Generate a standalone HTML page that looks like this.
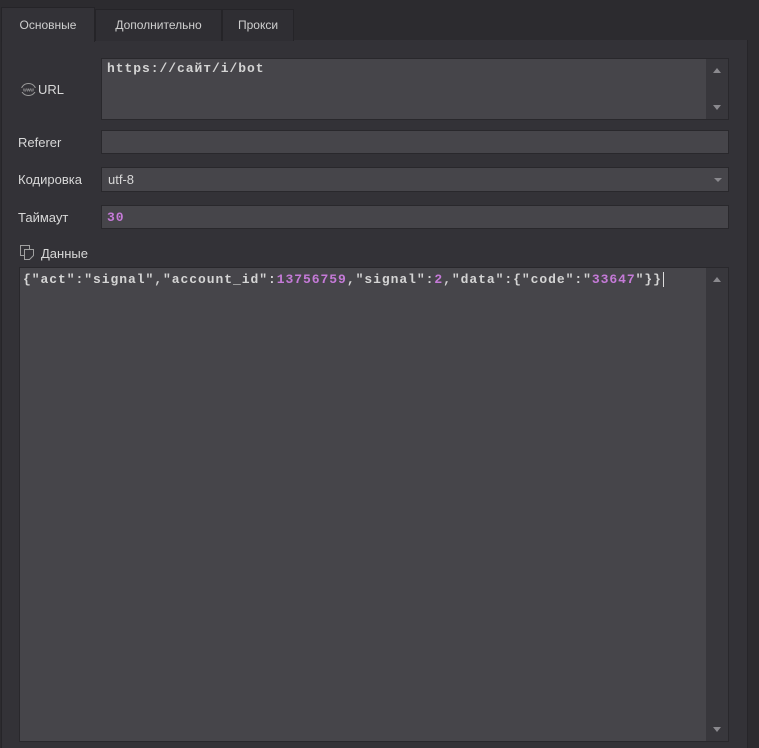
<!DOCTYPE html>
<html><head><meta charset="utf-8"><style>
body{margin:0;width:759px;height:748px;background:#2c2b2f;position:relative;overflow:hidden;font-family:"Liberation Sans",sans-serif;font-size:13px;color:#d8d8d8}
.a{position:absolute}
.tab{position:absolute;top:9px;height:31px;background:#2f2e33;border:1px solid #252428;border-bottom:none;line-height:31px;text-align:center;color:#cfcfcf;font-size:12px}
.panel{left:1px;top:40px;width:745px;height:708px;background:#333237;border-left:1px solid #262529;border-right:1px solid #262529}
.f{position:absolute;background:#46454a;border:1px solid #29282c;box-sizing:border-box}
.lbl{position:absolute;color:#d8d8d8;font-size:13px}
.mono{font-family:"Liberation Mono",monospace;font-size:13px;letter-spacing:0.95px;color:#d4d4d4;font-weight:bold}
.sb{position:absolute;right:0;top:0;bottom:0;width:22px;background:#38373c}
.up,.dn{position:absolute;left:7px;width:0;height:0;border-left:4px solid transparent;border-right:4px solid transparent}
.up{border-bottom:5px solid #8a898e;top:9px}
.dn{border-top:5px solid #8a898e;bottom:9px}
.p{color:#c57ad8}
</style></head><body>
<div class="a panel"></div>
<div class="tab" style="left:1px;width:92px;background:#333237;top:7px;height:34px;line-height:34px">Основные</div>
<div class="tab" style="left:95px;width:125px">Дополнительно</div>
<div class="tab" style="left:222px;width:70px">Прокси</div>

<svg class="a" style="left:20px;top:83px" width="17" height="13" viewBox="0 0 17 13"><ellipse cx="8.5" cy="6.5" rx="7" ry="6" fill="none" stroke="#9a9a9a"/><rect x="0" y="5" width="17" height="4" fill="#333237"/><text x="8.5" y="8.5" font-size="5" text-anchor="middle" fill="#bbb" font-family="Liberation Sans">www</text></svg>
<div class="lbl" style="left:38px;top:82px">URL</div>
<div class="f" style="left:101px;top:58px;width:628px;height:62px"><div class="mono" style="position:absolute;left:5px;top:2px">https://сайт/i/bot</div><div class="sb"><div class="up"></div><div class="dn"></div></div></div>

<div class="lbl" style="left:18px;top:135px">Referer</div>
<div class="f" style="left:101px;top:130px;width:628px;height:24px"></div>

<div class="lbl" style="left:18px;top:172px">Кодировка</div>
<div class="f" style="left:101px;top:167px;width:628px;height:25px"><div style="position:absolute;left:6px;top:4px;color:#d8d8d8">utf-8</div><div class="dn" style="left:auto;right:6px;bottom:9px;border-top-width:4px"></div></div>

<div class="lbl" style="left:18px;top:210px">Таймаут</div>
<div class="f" style="left:101px;top:205px;width:628px;height:24px"><div class="mono p" style="position:absolute;left:5px;top:4px">30</div></div>

<svg class="a" style="left:20px;top:245px" width="14" height="15" viewBox="0 0 14 15"><rect x="0.5" y="0.5" width="9" height="10" fill="none" stroke="#a0a0a0"/><path d="M4.5 4.5h9v6l-4 4h-5z" fill="#333237" stroke="#a0a0a0"/></svg>
<div class="lbl" style="left:41px;top:246px">Данные</div>
<div class="f" style="left:19px;top:267px;width:710px;height:475px"><div class="mono" style="position:absolute;left:3px;top:4px;white-space:pre">{"act":"signal","account_id":<span class="p">13756759</span>,"signal":<span class="p">2</span>,"data":{"code":"<span class="p">33647</span>"}}<span style="border-left:1px solid #ddd;margin-left:1px"></span></div><div class="sb"><div class="up"></div><div class="dn"></div></div></div>
</body></html>
